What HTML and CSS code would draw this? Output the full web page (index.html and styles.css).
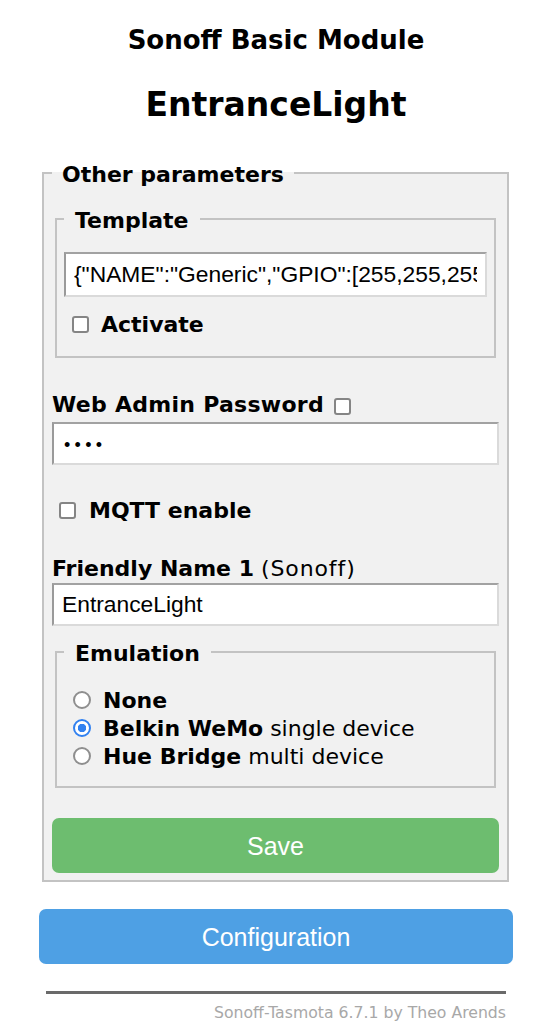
FILE: index.html
```html
<!DOCTYPE html>
<html>
<head>
<meta charset="utf-8">
<link rel="stylesheet" href="styles.css">
</head>
<body>
<div class="page">
  <h3 class="module">Sonoff Basic Module</h3>
  <h2 class="device">EntranceLight</h2>

  <fieldset class="outer">
    <legend class="legend outer-legend">Other parameters</legend>

    <fieldset class="inner template">
      <legend class="legend inner-legend">Template</legend>
      <input class="field field-template" type="text" value='{"NAME":"Generic","GPIO":[255,255,255,255,255,255,255,255,255,255,255,255,255],"FLAG":1,"BASE":1}'>
      <label class="check-row activate">
        <span class="checkbox"></span>
        <b>Activate</b>
      </label>
    </fieldset>

    <div class="label pw-label">
      <b>Web Admin Password</b>
      <span class="checkbox pw-check"></span>
    </div>
    <input class="field field-plain field-pw" type="password" value="1234">

    <label class="check-row mqtt">
      <span class="checkbox"></span>
      <b>MQTT enable</b>
    </label>

    <div class="label friendly-label"><b>Friendly Name 1</b> <span class="hint">(Sonoff)</span></div>
    <input class="field field-plain field-name" type="text" value="EntranceLight">

    <fieldset class="inner emulation">
      <legend class="legend inner-legend">Emulation</legend>
      <div class="radio-row"><span class="radio"></span><b>None</b></div>
      <div class="radio-row"><span class="radio checked"></span><span><b>Belkin WeMo</b> single device</span></div>
      <div class="radio-row"><span class="radio"></span><span><b>Hue Bridge</b> multi device</span></div>
    </fieldset>

    <button class="btn save">Save</button>
  </fieldset>

  <button class="btn config">Configuration</button>

  <div class="rule"></div>
  <div class="footer">Sonoff-Tasmota 6.7.1 by Theo Arends</div>
</div>
</body>
</html>
```

FILE: styles.css
```css
html, body {
  margin: 0;
  padding: 0;
  background: #ffffff;
}

body {
  font-family: "DejaVu Sans", Verdana, sans-serif;
  color: #000;
}

.page {
  width: 474px;
  margin-left: 39px;
  padding-top: 25px;
  display: flex;
  flex-direction: column;
}

.module {
  margin: 0;
  font-size: 26px;
  line-height: 30px;
  font-weight: bold;
  text-align: center;
}

.device {
  margin: 30px 0 0 0;
  font-size: 33px;
  line-height: 40px;
  font-weight: bold;
  text-align: center;
}

fieldset {
  margin: 0;
  min-width: 0;
}

.outer {
  margin: 34px 4px 0 3px;
  border: 2px solid #c3c3c3;
  background: #f1f1f1;
  padding: 18px 8px 7px 8px;
  display: flex;
  flex-direction: column;
}

.legend {
  font-size: 22px;
  line-height: 24px;
  font-weight: bold;
  padding-top: 4px;
}

.outer-legend {
  padding-left: 10px;
  padding-right: 10px;
}

.inner {
  margin: 0 3px;
  border: 2px solid #c3c3c3;
  background: #f1f1f1;
  padding: 19px 7px 20px 7px;
}

.inner-legend {
  padding-left: 11px;
  padding-right: 11px;
}

.field {
  display: block;
  width: 100%;
  box-sizing: border-box;
  margin: 0;
  border: 2px solid #dadada;
  border-top-color: #a2a2a2;
  border-left-color: #9a9a9a;
  background: #fff;
  font-family: "Liberation Sans", Arial, sans-serif;
  font-size: 22.8px;
  color: #000;
  padding: 0 8px;
  outline: none;
}

.field-template {
  height: 45px;
}

.field-plain {
  height: 43px;
}

.field-pw {
  font-size: 18px;
  letter-spacing: 4.3px;
  padding-left: 10px;
  padding-top: 3px;
}

.check-row {
  display: flex;
  align-items: center;
  height: 24px;
  font-size: 22px;
}

.activate {
  margin-top: 15px;
  margin-left: 8px;
  gap: 12px;
}

.checkbox {
  display: inline-block;
  width: 17px;
  height: 17px;
  box-sizing: border-box;
  border: 2px solid #858585;
  border-radius: 3px;
  background: #fff;
  flex: none;
}

.label {
  font-size: 22px;
  line-height: 24px;
}

.pw-label {
  margin-top: 35px;
  display: flex;
  align-items: center;
  gap: 10px;
  letter-spacing: 0.28px;
}

.pw-check {
  margin-top: 3px;
}

.pw-label + .field {
  margin-top: 5px;
}

.mqtt {
  margin-top: 33px;
  margin-left: 7px;
  gap: 13px;
}

.friendly-label {
  margin-top: 35px;
}

.hint {
  letter-spacing: 0.9px;
}

.field-name {
  margin-top: 2px;
}

.emulation {
  margin-top: 12px;
  padding: 20px 7px 16px 7px;
}

.radio-row {
  display: flex;
  align-items: center;
  height: 28px;
  font-size: 22px;
  gap: 12px;
  padding-left: 9px;
}

.radio {
  width: 18px;
  height: 18px;
  box-sizing: border-box;
  border: 2px solid #8f8f8f;
  border-radius: 50%;
  background: #fff;
  flex: none;
}

.radio.checked {
  border-color: #3181f0;
  background: radial-gradient(circle, #3181f0 0 4px, #fff 4.5px);
}

.btn {
  display: block;
  width: 100%;
  border: none;
  border-radius: 7px;
  color: #fff;
  font-family: "Liberation Sans", Arial, sans-serif;
  font-size: 25px;
  cursor: pointer;
  padding-top: 2px;
}

.save {
  margin-top: 30px;
  height: 55px;
  background: #6dbd6f;
}

.config {
  margin-top: 27px;
  height: 55px;
  background: #4ea0e4;
}

.rule {
  margin: 27px 7px 0 7px;
  height: 3px;
  background: #6a6a6a;
}

.footer {
  margin: 9px 7px 0 0;
  font-size: 15.7px;
  line-height: 20px;
  color: #a8a8a8;
  text-align: right;
}
```
